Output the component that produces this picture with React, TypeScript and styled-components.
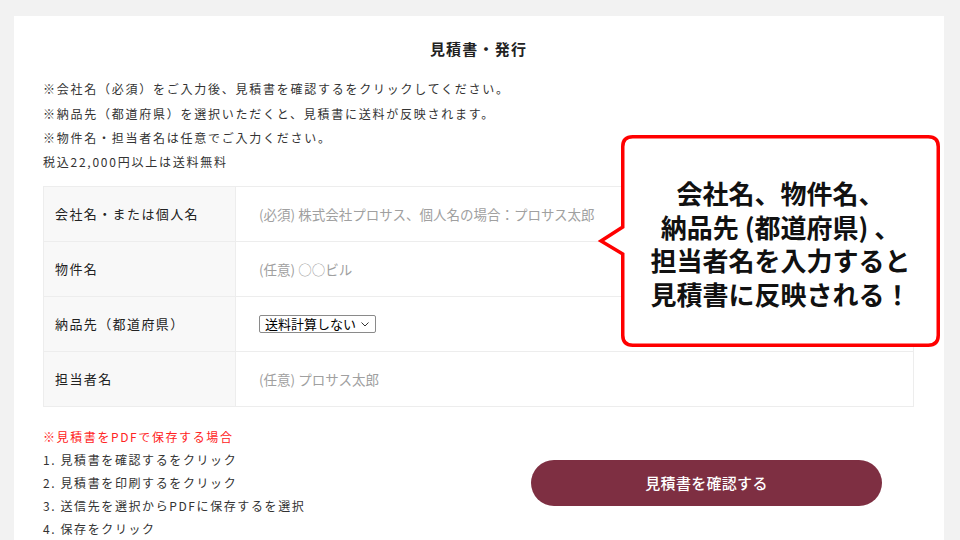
import React from "react";
import styled, { createGlobalStyle } from "styled-components";

const Global = createGlobalStyle`
  html, body { margin: 0; padding: 0; }
  body {
    background: #f2f2f2;
    font-family: "Noto Sans CJK JP", "Noto Sans", sans-serif;
    color: #333;
    width: 960px;
    height: 540px;
    overflow: hidden;
  }
`;

const Page = styled.div`
  position: relative;
  width: 960px;
  height: 540px;
  padding: 16px 0 0 14px;
  box-sizing: border-box;
  overflow: hidden;
`;

const Panel = styled.div`
  width: 930px;
  height: 600px;
  background: #fff;
  box-sizing: border-box;
  padding: 22px 30px 0 29px;
`;

const Title = styled.h2`
  margin: 0;
  text-align: center;
  font-size: 15px;
  line-height: 22px;
  font-weight: 700;
  letter-spacing: 1.2px;
  color: #222;
`;

const Notes = styled.div`
  margin-top: 17px;
  font-size: 12px;
  letter-spacing: 1.75px;
  color: #333;
`;

const NoteLine = styled.p<{ $tight?: boolean }>`
  margin: 0;
  line-height: ${(p) => (p.$tight ? "21px" : "24.5px")};
`;

const Table = styled.div`
  margin-top: 14px;
  display: grid;
  grid-template-columns: 192px 1fr;
  border-top: 1px solid #ededed;
  border-left: 1px solid #ededed;
`;

const LabelCell = styled.div`
  height: 54px;
  display: flex;
  align-items: center;
  padding-left: 11px;
  background: #f8f8f8;
  border-bottom: 1px solid #ededed;
  border-right: 1px solid #ededed;
  font-size: 13px;
  letter-spacing: 1.4px;
  color: #222;
`;

const ValueCell = styled.div`
  height: 54px;
  display: flex;
  align-items: center;
  padding-left: 23px;
  border-bottom: 1px solid #ededed;
  border-right: 1px solid #ededed;
`;

const TextInput = styled.input`
  border: none;
  outline: none;
  padding: 0;
  width: 100%;
  font-family: inherit;
  font-size: 13.5px;
  color: #333;
  background: transparent;
  &::placeholder {
    color: #a0a0a0;
  }
`;

const SelectWrap = styled.span`
  position: relative;
  display: inline-flex;
`;

const Select = styled.select`
  appearance: none;
  -webkit-appearance: none;
  font-family: inherit;
  font-size: 13px;
  line-height: 16px;
  height: 18px;
  width: 117px;
  box-sizing: border-box;
  padding: 0 0 0 5px;
  border: 1px solid #8a8a8a;
  border-radius: 2px;
  background: #fff;
  color: #000;
`;

const Chevron = styled.svg`
  position: absolute;
  right: 7px;
  top: 7px;
  pointer-events: none;
`;

const Bottom = styled.div`
  margin-top: 18px;
  display: flex;
  align-items: center;
  justify-content: space-between;
`;

const Steps = styled.div`
  font-size: 12px;
  letter-spacing: 1.6px;
  color: #333;
`;

const StepLine = styled.p<{ $red?: boolean }>`
  margin: 0;
  line-height: 23.2px;
  color: ${(p) => (p.$red ? "#ff2323" : "#333")};
`;

const ConfirmButton = styled.button`
  width: 351px;
  height: 46px;
  margin-right: 32px;
  border: none;
  border-radius: 23px;
  background: #7e2f42;
  color: #fff;
  font-family: inherit;
  font-size: 15px;
  font-weight: 500;
  letter-spacing: 0.3px;
  cursor: pointer;
`;

const Callout = styled.div`
  position: absolute;
  left: 597px;
  top: 133px;
  width: 346px;
  height: 216px;
`;

const BubbleShape = styled.svg`
  position: absolute;
  inset: 0;
`;

const CalloutText = styled.div`
  position: absolute;
  left: 26px;
  top: 4px;
  width: 315px;
  height: 208px;
  display: flex;
  flex-direction: column;
  align-items: center;
  justify-content: center;
  padding-top: 4px;
  box-sizing: border-box;
  font-size: 26px;
  line-height: 33.5px;
  font-weight: 700;
  color: #111;
  text-align: center;
  white-space: pre;
`;

const rows = [
  { label: "会社名・または個人名", placeholder: "(必須) 株式会社プロサス、個人名の場合：プロサス太郎" },
  { label: "物件名", placeholder: "(任意) ○○ビル" },
  { label: "納品先（都道府県）", select: true },
  { label: "担当者名", placeholder: "(任意) プロサス太郎" },
];

export default function App() {
  return (
    <>
      <Global />
      <Page>
        <Panel>
          <Title>見積書・発行</Title>
          <Notes>
            <NoteLine>※会社名（必須）をご入力後、見積書を確認するをクリックしてください。</NoteLine>
            <NoteLine>※納品先（都道府県）を選択いただくと、見積書に送料が反映されます。</NoteLine>
            <NoteLine>※物件名・担当者名は任意でご入力ください。</NoteLine>
            <NoteLine $tight>税込22,000円以上は送料無料</NoteLine>
          </Notes>
          <Table>
            {rows.map((r) => (
              <React.Fragment key={r.label}>
                <LabelCell>{r.label}</LabelCell>
                <ValueCell>
                  {r.select ? (
                    <SelectWrap>
                      <Select defaultValue="none">
                        <option value="none">送料計算しない</option>
                      </Select>
                      <Chevron width="8" height="5" viewBox="0 0 8 5">
                        <path d="M0.5 0.5 L4 4 L7.5 0.5" fill="none" stroke="#333" strokeWidth="1" />
                      </Chevron>
                    </SelectWrap>
                  ) : (
                    <TextInput placeholder={r.placeholder} />
                  )}
                </ValueCell>
              </React.Fragment>
            ))}
          </Table>
          <Bottom>
            <Steps>
              <StepLine $red>※見積書をPDFで保存する場合</StepLine>
              <StepLine>1. 見積書を確認するをクリック</StepLine>
              <StepLine>2. 見積書を印刷するをクリック</StepLine>
              <StepLine>3. 送信先を選択からPDFに保存するを選択</StepLine>
              <StepLine>4. 保存をクリック</StepLine>
            </Steps>
            <ConfirmButton>見積書を確認する</ConfirmButton>
          </Bottom>
        </Panel>
        <Callout>
          <BubbleShape width="346" height="216" viewBox="0 0 346 216">
            <path
              d="M25.75 94 L25.75 13.75 Q25.75 3.75 35.75 3.75 L331.25 3.75 Q341.25 3.75 341.25 13.75 L341.25 202.25 Q341.25 212.25 331.25 212.25 L35.75 212.25 Q25.75 212.25 25.75 202.25 L25.75 121 L4 108 Z"
              fill="#fff"
              stroke="#ff0000"
              strokeWidth="3.5"
              strokeLinejoin="miter"
            />
          </BubbleShape>
          <CalloutText>
            {"会社名、物件名、\n納品先 (都道府県) 、\n担当者名を入力すると\n見積書に反映される！"}
          </CalloutText>
        </Callout>
      </Page>
    </>
  );
}
